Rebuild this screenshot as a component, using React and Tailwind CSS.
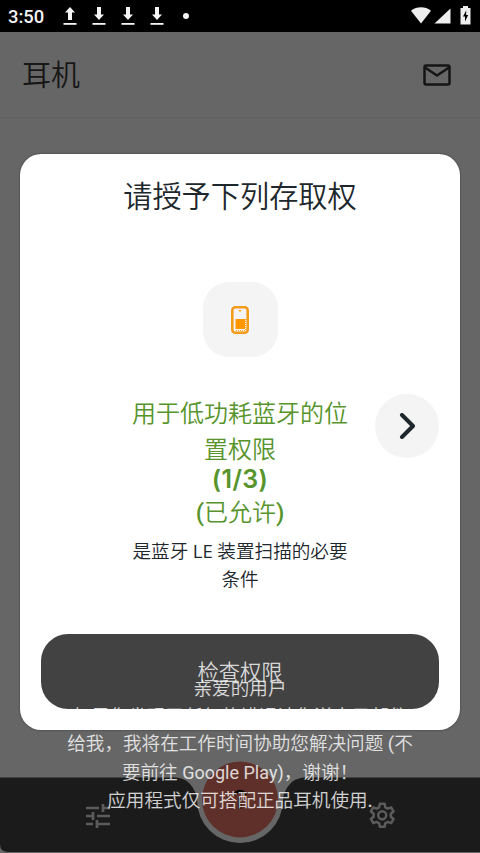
import React from "react";

const noticeLines = [
  "亲爱的用户",
  "如果您发现了任何的错误请您送电子邮件",
  <>给我，我将在工作时间协助您解决问题 <span className="font-normal">(</span>不</>,
  <>要前往 <span className="text-[18px] font-normal">Google Play)</span>，谢谢！</>,
  <>应用程式仅可搭配正品耳机使用<span className="font-medium">.</span></>,
];

const TransferIcon = ({ up }) => (
  <svg width="14" height="20" viewBox="0 0 14 20" fill="#f4f4f4">
    <path d={up ? "M7 0 12 5.5H9V13H5V5.5H2z" : "M5 0H9V7.5H12L7 13 2 7.5H5z"} />
    <rect x="0.5" y="16" width="13" height="1.8" />
  </svg>
);

const StatusBar = () => (
  <div className="flex h-8 shrink-0 items-center bg-black pl-2 pr-[9px] text-[#f4f4f4]">
    <span className="w-[54.5px] pt-px text-[18.400px] font-medium">3:50</span>
    <div className="flex gap-[15.300px] pt-px">
      <TransferIcon up />
      <TransferIcon />
      <TransferIcon />
      <TransferIcon />
    </div>
    <span className="ml-[19px] size-[6px] rounded-full bg-[#f4f4f4]" />
    <div className="ml-auto flex items-center pb-px">
      <svg width="20" height="17" viewBox="0 0 20 17" fill="#eee">
        <path d="M0 3.7C5.5-.9 14.500-.9 20 3.700L10 16.500z" />
      </svg>
      <svg className="ml-[3px]" width="17" height="17" viewBox="0 0 17 17" fill="#eee">
        <path d="M16.500 1.500V16.500H.5z" />
      </svg>
      <svg className="ml-[9px]" width="11" height="19" viewBox="0 0 11 19">
        <path d="M3 0H8V2H10.500V18.500H.5V2H3z" fill="#eee" />
        <path d="M6.200 4.500 3 10.500H5V15.500L8.200 9H6.200z" fill="#000" />
      </svg>
    </div>
  </div>
);

const Header = () => (
  <header className="flex h-[86px] shrink-0 items-center justify-between border-b border-[#626262] pl-[22px] pr-[29px]">
    <h1 className="pt-[4px] text-[29px] leading-none text-[#171717]">耳机</h1>
    <svg width="28" height="22" viewBox="0 0 28 22" fill="none" stroke="#151515" strokeWidth="2.500">
      <rect x="1.500" y="1.500" width="25" height="19" rx="1.500" />
      <path d="M2 3.500 14 11.500 26 3.500" />
    </svg>
  </header>
);

const BottomNav = () => (
  <nav className="relative h-[99px] shrink-0">
    <svg className="absolute inset-0" width="480" height="99" viewBox="0 0 480 99">
      <path
        d="M0 23.500H174C186 23.500 192 30 196 40Q197 43 197 46A43 43 0 0 0 283 46Q283 43 284 40C288 30 294 23.500 306 23.500H480V98H8Q0 98 0 90z"
        fill="#1b1b1b"
      />
      <circle cx="240" cy="45.500" r="38" fill="#5f302a" />
      <path d="M233.500 40.500Q240 34 246.500 40.500M240 44V55" stroke="#090606" strokeWidth="3" fill="none" />
      <path d="M86 54H99M103 54H110M103 50V58M86 62H93M93 58V66M97 62H110M86 70H93M97 70H110M97 66V74" stroke="#5b5b5b" strokeWidth="2.700" fill="none" />
      <g transform="translate(367.100 46.600) scale(1.260)" fill="none" stroke="#5b5b5b" strokeWidth="2" strokeLinejoin="round">
        <path d="M10.100 2.500h3.800l.5 2.800 2 1.100 2.700-1 1.900 3.300-2.200 1.800v2.300l2.200 1.800-1.900 3.300-2.700-1-2 1.100-.5 2.800h-3.800l-.5-2.800-2-1.100-2.700 1L3 14.600l2.200-1.800v-2.300L3 8.700l1.900-3.300 2.700 1 2-1.100z" />
        <circle cx="12" cy="11.700" r="3.200" />
      </g>
    </svg>
  </nav>
);

const PermissionDialog = () => (
  <section className="absolute left-5 top-[154px] flex h-[576px] w-[440px] flex-col items-center rounded-[21px] bg-white shadow-[0_0_2px_#333]">
    <h2 className="mt-[23px] text-[29.200px] leading-10 text-[#1d272c]">请授予下列存取权</h2>
    <div className="mt-[65px] flex size-[75px] items-center justify-center rounded-[26px] bg-[#f4f4f4]">
      <svg width="18" height="28" viewBox="0 0 18 28">
        <rect x="1.300" y="1.300" width="15.400" height="25.400" rx="3" fill="none" stroke="#f39b1b" strokeWidth="2.600" />
        <rect x="4.500" y="13" width="9.500" height="10" fill="#ff9800" />
        <path d="M7.500 4H10.500L9 6z" fill="#ff9800" />
        <path d="M5 24.700H14M14.600 13V24" stroke="#ff9800" strokeWidth="1" strokeDasharray="1 1" />
      </svg>
    </div>
    <div className="mt-[38px] grid w-full grid-cols-[1fr_220px_1fr]">
      <div className="col-start-2 text-center text-[24px] text-[#57942b]">
        <p className="pt-px leading-[36px]">用于低功耗蓝牙的位<br />置权限</p>
        <p className="-mt-px font-['Inter'] text-[25px] font-semibold leading-[24px] tracking-[0.4px]">(1/3)</p>
        <p className="pt-[2px] leading-[41px]"><b className="font-medium">(</b>已允许<b className="font-medium">)</b></p>
        <p className="mt-[5px] text-[18.600px] leading-[27.500px] text-[#1d272c]">
          是蓝牙 <span className="font-['Open_Sans'] font-normal leading-none">LE</span> 装置扫描的必要<br />条件
        </p>
      </div>
      <button className="-mt-px ml-[25px] flex size-16 items-center justify-center rounded-full bg-[#f4f4f4]">
        <svg width="16" height="26" viewBox="0 0 16 26" fill="none" stroke="#1d272c" strokeWidth="4" strokeLinecap="round" strokeLinejoin="round">
          <path d="M3 2 14 13 3 24" />
        </svg>
      </button>
    </div>
    <button className="absolute left-[21px] top-[480px] h-[75px] w-[398px] rounded-[27px] bg-[#424242] pt-0.5 text-[21.300px] text-[#d8d8d8]">
      检查权限
    </button>
  </section>
);

const App = () => (
  <div className="relative flex h-[853px] w-[480px] flex-col overflow-hidden bg-[#666] font-['Roboto','Noto_Sans_CJK_SC',sans-serif] font-[350]">
    <StatusBar />
    <Header />
    <main className="flex-1" />
    <BottomNav />
    <PermissionDialog />
    <div className="absolute left-0 top-[676px] w-full text-center text-[18.600px] leading-[27.700px] text-white/80">
      {noticeLines.map((line, i) => (
        <p key={i}>{line}</p>
      ))}
    </div>
  </div>
);

export default App;
